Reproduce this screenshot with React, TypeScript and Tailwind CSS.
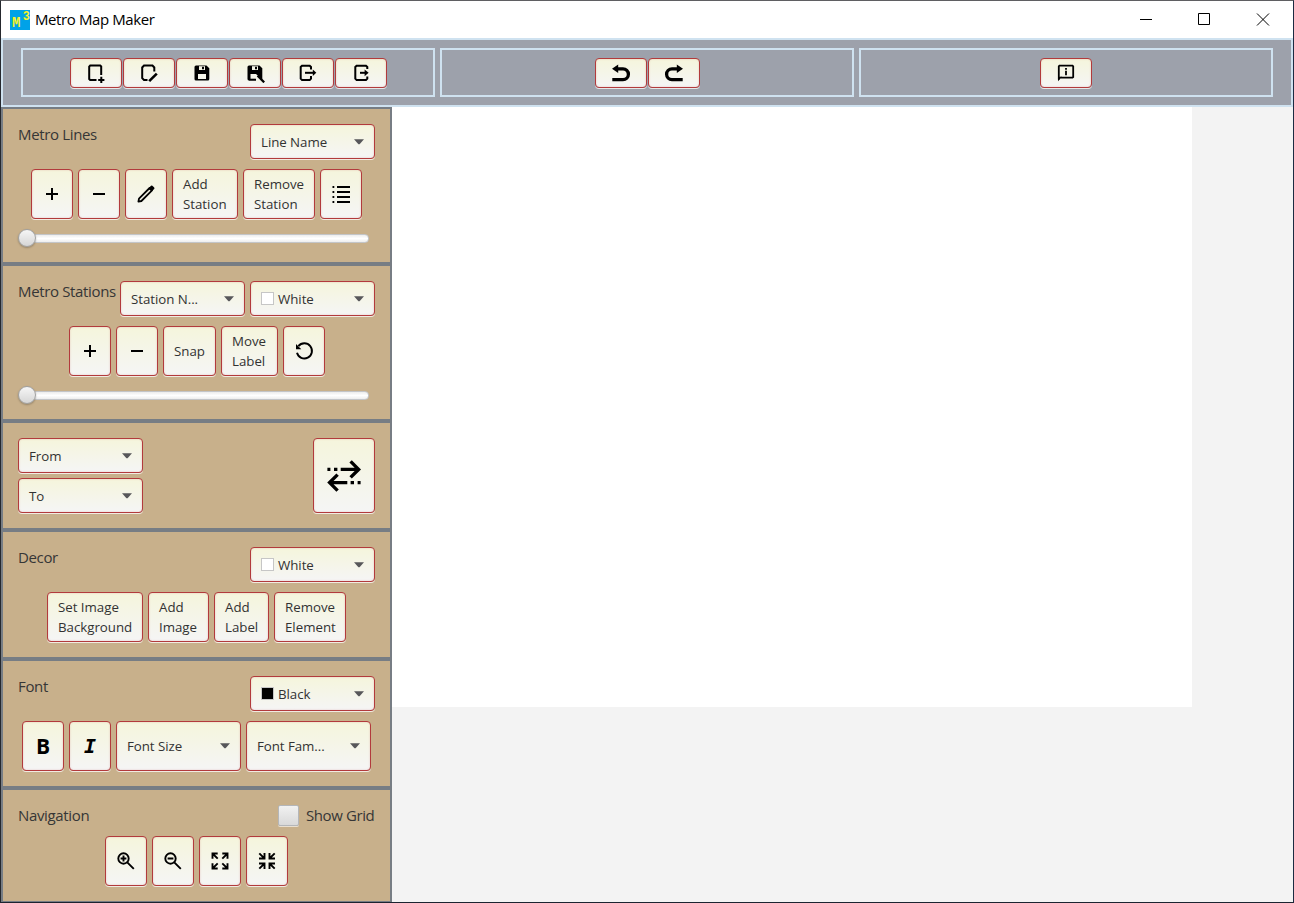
import type { ReactNode } from "react";

const FACE =
  "rounded-[4px] border border-[#b23a3c] bg-linear-to-b from-[#f5f5dc] to-[#f5f5f5] shadow-[0_1px_0_rgba(255,255,255,0.75),inset_0_0_2px_rgba(178,58,60,0.28)] text-[#323232] text-[13.3px] leading-[20px]";

function Icon({ children, size = 20, w = 2 }: { children: ReactNode; size?: number; w?: number }) {
  return (
    <svg width={size} height={size} viewBox={`0 0 ${size} ${size}`} fill="none" stroke="#000" strokeWidth={w} className="block shrink-0">
      {children}
    </svg>
  );
}

function ToolButton({ children }: { children: ReactNode }) {
  return <button className={`${FACE} flex h-[30px] w-[52px] shrink-0 items-center justify-center`}>{children}</button>;
}

function IconButton({ children }: { children: ReactNode }) {
  return <button className={`${FACE} flex h-[50px] w-[42px] shrink-0 items-center justify-center`}>{children}</button>;
}

function TextButton({ width, lines }: { width: string; lines: string[] }) {
  return (
    <button className={`${FACE} ${width} flex h-[50px] shrink-0 flex-col justify-center pl-[10px] text-left tracking-[-0.02px] whitespace-nowrap`}>
      {lines.map((l) => (
        <span key={l}>{l}</span>
      ))}
    </button>
  );
}

function Combo({ label, swatch, tall = false }: { label: string; swatch?: string; tall?: boolean }) {
  return (
    <button className={`${FACE} ${tall ? "h-[50px]" : "h-[35px]"} flex w-[125px] shrink-0 items-center px-[10px] tracking-[-0.05px] whitespace-nowrap`}>
      {swatch && <span className={`${swatch} mr-1 size-[13px] border border-[#c6c6c6]`} />}
      <span className={tall ? "" : "mt-[1px]"}>{label}</span>
      <svg width="10" height="6" viewBox="0 0 10 6" className="ml-auto" fill="#57575a">
        <path d="M0 0.3H10L6 4.8Q5 5.8 4 4.8Z" />
      </svg>
    </button>
  );
}

function Slider() {
  return (
    <div className="flex h-[18px] items-center">
      <div className="z-10 size-[18px] shrink-0 rounded-full border border-[#a0a0a0] bg-linear-to-b from-[#f6f6f6] to-[#d6d6d6] shadow-[0_1px_2px_rgba(0,0,0,0.25)]" />
      <div className="mt-[1px] -ml-[4px] h-[9px] w-[337px] rounded-[4px] border border-[#c3c5c8] bg-linear-to-b from-[#ececec] via-white to-[#ededed]" />
    </div>
  );
}

function Panel({ children }: { children: ReactNode }) {
  return <section className="flex shrink-0 flex-col gap-[10px] border-2 border-[#777d84] bg-[#c8b08b] p-[15px]">{children}</section>;
}

function Heading({ children }: { children: ReactNode }) {
  return <span className="mr-auto text-[15px] leading-[21px] tracking-[-0.35px] whitespace-nowrap text-[#363636]">{children}</span>;
}

function Row({ children }: { children: ReactNode }) {
  return <div className="flex justify-center gap-[5px]">{children}</div>;
}

const Plus = () => (
  <Icon>
    <path d="M4 10H16M10 4V16" />
  </Icon>
);
const Minus = () => (
  <Icon>
    <path d="M4 10H16" />
  </Icon>
);

function Floppy({ pen = false }: { pen?: boolean }) {
  return (
    <Icon>
      <path d="M4 2.5H14.5L17.3 5.3V16Q17.3 17.5 15.8 17.5H4Q2.5 17.5 2.5 16V4Q2.5 2.5 4 2.5Z" fill="#000" stroke="none" />
      <path d="M7 3.2H13V7H7Z" fill="#f5f5e6" stroke="none" />
      <path d="M10 3.8H12V6.2H10Z" fill="#000" stroke="none" />
      {pen ? (
        <>
          <path d="M5.5 11H11L17.5 17V20H11V16H5.5Z" fill="#f5f5ea" stroke="none" />
          <path d="M4 16.6H11" strokeWidth="1.8" />
          <path d="M12.6 12.8L19.2 19.4" strokeWidth="2.2" />
        </>
      ) : (
        <path d="M6 11H14V16H6Z" fill="#f5f5ea" stroke="none" />
      )}
    </Icon>
  );
}

const ToolGroup = ({ children, nudge = "pl-px" }: { children: ReactNode; nudge?: string }) => (
  <div className={`flex w-[414px] items-center justify-center gap-px border-2 border-[#cfe2f0] ${nudge}`}>{children}</div>
);

function TitleBar() {
  return (
    <header className="flex h-[37px] shrink-0 items-center bg-white pl-[9px] text-[15px] text-black">
      <div className="relative size-5 bg-[#00a2e8] font-bold text-[#f7f32a]">
        <span className="absolute top-[6px] left-[2px] font-['Liberation_Mono',monospace] text-[14px] leading-[15px]">M</span>
        <span className="absolute -top-px left-[13px] font-['Liberation_Sans',sans-serif] text-[12px] leading-[14px]">3</span>
      </div>
      <span className="ml-[5px] tracking-[-0.4px]">Metro Map Maker</span>
      <svg width="130" height="13" viewBox="0 0 130 13" className="mr-[23px] ml-auto" fill="none" stroke="#000">
        <path d="M0 6.5H12M58.5 0.5H69.5V11.5H58.5ZM117 0.5L129 12.5M129 0.5L117 12.5" />
      </svg>
    </header>
  );
}

function Toolbar() {
  return (
    <div className="flex h-[69px] shrink-0 justify-start gap-[5px] border-2 border-[#cfe2f0] bg-[#9da1ab] py-2 pl-[18px]">
      <ToolGroup>
        <ToolButton>
          <Icon>
            <path d="M15.2 12V3.5L14.2 2.6H4.2L3.2 3.6V16L4.2 17H10.5" strokeWidth="2" />
            <path d="M12.2 17H18.4M15.3 13.8V20" />
          </Icon>
        </ToolButton>
        <ToolButton>
          <Icon>
            <path d="M15.3 8.5V4.5L13.5 2.6H5L3.2 4.5V15.2L5 17H8.5" strokeWidth="2" />
            <path d="M10.2 18.2L17.8 10.6" strokeWidth="2.6" />
          </Icon>
        </ToolButton>
        <ToolButton>
          <Floppy />
        </ToolButton>
        <ToolButton>
          <Floppy pen />
        </ToolButton>
        <ToolButton>
          <Icon>
            <path d="M13 6.5V4L11.7 2.7H4L2.7 4V15.7L4 17H11.7L13 15.7V13" strokeWidth="2" />
            <path d="M7 9.8H16" strokeWidth="2" />
            <path d="M14.8 6.6L18.3 9.8L14.8 13Z" fill="#000" stroke="none" />
          </Icon>
        </ToolButton>
        <ToolButton>
          <Icon>
            <path d="M16.3 6V4L15 2.7H5.6L4.3 4V15.7L5.6 17H15L16.3 15.7V13.6" strokeWidth="2" />
            <path d="M9 9.8H15" strokeWidth="2" />
            <path d="M13.6 6.4L17.6 9.8L13.6 13.2Z" fill="#000" stroke="none" />
          </Icon>
        </ToolButton>
      </ToolGroup>
      <ToolGroup>
        <ToolButton>
          <Icon w={3.3}>
            <path d="M6 5.8H12A5.4 5.4 0 0 1 12 16.6H1.3" />
            <path d="M1 5.8L7.2 1.6V10Z" fill="#000" stroke="none" />
          </Icon>
        </ToolButton>
        <ToolButton>
          <Icon w={3.3}>
            <path d="M14 5.8H8A5.4 5.4 0 0 0 8 16.6H18.7" />
            <path d="M19 5.8L12.8 1.6V10Z" fill="#000" stroke="none" />
          </Icon>
        </ToolButton>
      </ToolGroup>
      <ToolGroup nudge="pr-px">
        <ToolButton>
          <Icon>
            <path d="M2.8 16.5V3.3L3.4 2.7H16.5L17.2 3.4V14L16.5 14.6H4.5" strokeWidth="1.8" />
            <path d="M2 13.8H6L2 18.2Z" fill="#000" stroke="none" />
            <path d="M10 5V6.8M10 7.8V12.2" strokeWidth="1.8" />
          </Icon>
        </ToolButton>
      </ToolGroup>
    </div>
  );
}

function Sidebar() {
  return (
    <aside className="flex w-[391px] shrink-0 flex-col">
      <Panel>
        <div className="flex">
          <Heading>Metro Lines</Heading>
          <Combo label="Line Name" />
        </div>
        <Row>
          <IconButton><Plus /></IconButton>
          <IconButton><Minus /></IconButton>
          <IconButton>
            <Icon>
              <path d="M2.4 17.6L3 14.6L13.6 4L16 6.4L5.4 17Z" strokeWidth="1.8" strokeLinejoin="round" />
              <path d="M12.4 4.4L15 1.8Q15.7 1.2 16.4 1.8L18.2 3.6Q18.8 4.3 18.2 5L15.6 7.6Z" fill="#000" stroke="none" />
            </Icon>
          </IconButton>
          <TextButton width="w-[66px]" lines={["Add", "Station"]} />
          <TextButton width="w-[72px]" lines={["Remove", "Station"]} />
          <IconButton>
            <Icon>
              <path d="M6 3H19M6 8H19M6 13H19M6 18H19" strokeWidth="1.8" />
              <path d="M1.5 3H3.3M1.5 8H3.3M1.5 13H3.3M1.5 18H3.3" strokeWidth="1.8" />
            </Icon>
          </IconButton>
        </Row>
        <Slider />
      </Panel>

      <Panel>
        <div className="flex gap-[5px]">
          <div className="flex w-[97px]">
            <Heading>Metro Stations</Heading>
          </div>
          <Combo label="Station N..." />
          <Combo label="White" swatch="bg-white" />
        </div>
        <div className="flex justify-center gap-[5px] pl-px">
          <IconButton><Plus /></IconButton>
          <IconButton><Minus /></IconButton>
          <TextButton width="w-[53px]" lines={["Snap"]} />
          <TextButton width="w-[57px]" lines={["Move", "Label"]} />
          <IconButton>
            <Icon>
              <path d="M4.4 5.2A7.6 7.6 0 1 1 3 11.8" strokeWidth="1.9" />
              <path d="M2 3L7.3 8.3H2Z" fill="#000" stroke="none" />
            </Icon>
          </IconButton>
        </div>
        <Slider />
      </Panel>

      <Panel>
        <div className="flex justify-between">
          <div className="flex flex-col gap-[5px]">
            <Combo label="From" />
            <Combo label="To" />
          </div>
          <button className={`${FACE} flex h-[75px] w-[62px] items-center justify-center`}>
            <Icon size={36} w={3.4}>
              <path d="M1.4 11.4H4.4M8 11.4H11.4M14.7 11.4H32M24.6 3.4L32.6 11.4L24.6 19.4" />
              <path d="M34.6 24.6H31.6M28 24.6H24.6M21.3 24.6H4M11.6 16.6L3.6 24.6L11.6 32.6" />
            </Icon>
          </button>
        </div>
      </Panel>

      <Panel>
        <div className="flex">
          <Heading>Decor</Heading>
          <Combo label="White" swatch="bg-white" />
        </div>
        <Row>
          <TextButton width="w-[96px]" lines={["Set Image", "Background"]} />
          <TextButton width="w-[61px]" lines={["Add", "Image"]} />
          <TextButton width="w-[55px]" lines={["Add", "Label"]} />
          <TextButton width="w-[72px]" lines={["Remove", "Element"]} />
        </Row>
      </Panel>

      <Panel>
        <div className="flex">
          <Heading>Font</Heading>
          <Combo label="Black" swatch="bg-black" />
        </div>
        <Row>
          <IconButton>
            <span className="text-[21px] font-bold text-black">B</span>
          </IconButton>
          <IconButton>
            <span className="font-['DejaVu_Sans_Mono',monospace] text-[20px] font-bold text-black italic">I</span>
          </IconButton>
          <Combo label="Font Size" tall />
          <Combo label="Font Fam..." tall />
        </Row>
      </Panel>

      <Panel>
        <div className="flex h-[21px] items-center">
          <Heading>Navigation</Heading>
          <span className="mr-[7px] size-[21px] rounded-[2px] border border-[#b4b6b9] bg-linear-to-b from-[#f1f1f1] to-[#d9d9d9] shadow-[0_1px_0_rgba(255,255,255,0.6)]" />
          <span className="w-[69px] text-[15px] leading-[21px] tracking-[-0.4px] whitespace-nowrap text-[#363636]">Show Grid</span>
        </div>
        <Row>
          <IconButton>
            <Icon>
              <circle cx="7.5" cy="7.5" r="5.2" strokeWidth="1.9" />
              <path d="M11.3 11.3L17.8 17.8M4.6 7.5H10.4M7.5 4.6V10.4" strokeWidth="1.9" />
            </Icon>
          </IconButton>
          <IconButton>
            <Icon>
              <circle cx="7.5" cy="7.5" r="5.2" strokeWidth="1.9" />
              <path d="M11.3 11.3L17.8 17.8M4.6 7.5H10.4" strokeWidth="1.9" />
            </Icon>
          </IconButton>
          <IconButton>
            <Icon>
              <path d="M2.5 7.7V2.5H7.7M12.3 2.5H17.5V7.7M17.5 12.3V17.5H12.3M7.7 17.5H2.5V12.3M2.5 2.5L7.7 7.7M17.5 2.5L12.3 7.7M17.5 17.5L12.3 12.3M2.5 17.5L7.7 12.3" strokeWidth="1.9" />
            </Icon>
          </IconButton>
          <IconButton>
            <Icon>
              <path d="M7.5 2V7.5H2M12.5 2V7.5H18M12.5 18V12.5H18M7.5 18V12.5H2M2.3 2.3L7.5 7.5M17.7 2.3L12.5 7.5M17.7 17.7L12.5 12.5M2.3 17.7L7.5 12.5" strokeWidth="1.9" />
            </Icon>
          </IconButton>
        </Row>
      </Panel>
    </aside>
  );
}

export default function App() {
  return (
    <div className="flex h-[903px] w-[1294px] flex-col overflow-hidden border border-t-[#5f5f62] border-r-[#1b2b42] border-b-[#1b2430] border-l-[#25282e] bg-[#f3f3f3] font-['Open_Sans','Noto_Sans',sans-serif]">
      <TitleBar />
      <Toolbar />
      <div className="flex h-[795px] shrink-0 overflow-hidden">
        <Sidebar />
        <main className="grow bg-[#f3f3f3]">
          <div className="h-[600px] w-[800px] bg-white" />
        </main>
      </div>
    </div>
  );
}
